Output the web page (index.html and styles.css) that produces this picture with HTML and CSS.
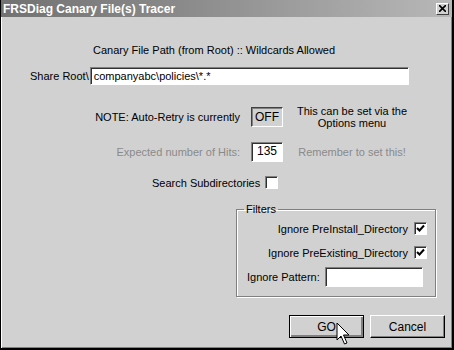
FILE: index.html
```html
<!DOCTYPE html>
<html lang="en">
<head>
    <meta charset="UTF-8">
    <title>FRSDiag Canary File(s) Tracer</title>
    <link rel="stylesheet" href="styles.css">
</head>
<body>
    <div class="window">
        <div class="titlebar">
            <span class="title">FRSDiag Canary File(s) Tracer</span>
            <span class="close-btn">
                <svg width="7" height="7" viewBox="0 0 7 7"><path d="M0 0L7 7M7 0L0 7" stroke="#000" stroke-width="1.6"/></svg>
            </span>
        </div>
        <div class="content">
            <div class="heading">Canary File Path (from Root) :: Wildcards Allowed</div>

            <div class="share-row">
                <span>Share Root\</span>
                <div class="field share-field">companyabc\policies\*.*</div>
            </div>

            <div class="opt-row note-row">
                <span class="opt-label">NOTE: Auto-Retry is currently</span>
                <div class="status-box">OFF</div>
                <div class="hint">This can be set via the<br>Options menu</div>
            </div>

            <div class="opt-row hits-row">
                <span class="opt-label dim">Expected number of Hits:</span>
                <div class="field num-field">135</div>
                <div class="hint dim">Remember to set this!</div>
            </div>

            <div class="sub-row">
                <span>Search Subdirectories</span>
                <span class="check"></span>
            </div>

            <fieldset class="filters">
                <legend>Filters</legend>
                <div class="filter-row">
                    <span>Ignore PreInstall_Directory</span>
                    <span class="check">
                        <svg width="9" height="9" viewBox="0 0 9 9"><path d="M1 4L3.5 6.5L8 1.5" fill="none" stroke="#000" stroke-width="2"/></svg>
                    </span>
                </div>
                <div class="filter-row">
                    <span>Ignore PreExisting_Directory</span>
                    <span class="check">
                        <svg width="9" height="9" viewBox="0 0 9 9"><path d="M1 4L3.5 6.5L8 1.5" fill="none" stroke="#000" stroke-width="2"/></svg>
                    </span>
                </div>
                <div class="pattern-row">
                    <span>Ignore Pattern:</span>
                    <div class="field pattern-field"></div>
                </div>
            </fieldset>

            <div class="buttons">
                <button class="btn btn-default">GO</button>
                <button class="btn">Cancel</button>
            </div>
        </div>

        <!-- mouse pointer over the GO button -->
        <svg class="cursor" width="14" height="24" viewBox="0 0 14 24">
            <path d="M1 1L1 18L5 14L8.5 22L11 21L7.5 13L13 13Z" fill="#fff" stroke="#000" stroke-width="1"/>
        </svg>
    </div>
</body>
</html>
```

FILE: styles.css
```css
body {
    margin: 0;
    font-family: "Liberation Sans", Arial, sans-serif;
    font-size: 11px;
    color: #000;
    white-space: nowrap;
}
.window {
    position: relative;
    width: 454px;
    height: 350px;
    box-sizing: border-box;
    background-color: #d1d1d1;
    border-left: 1px solid #000;
    border-right: 2px solid #000;
    border-bottom: 2px solid #000;
    box-shadow: inset 1px 0 #fff, inset -1px -1px #808080;
    overflow: hidden;
}
.titlebar {
    display: flex;
    align-items: center;
    justify-content: space-between;
    height: 17px;
    padding: 0 3px 0 2px;
    background: linear-gradient(to right, #727272, #8a8a8a 40%, #b8b8b8);
}
.title {
    color: #fff;
    font-weight: bold;
    font-size: 12px;
}
.close-btn {
    display: flex;
    align-items: center;
    justify-content: center;
    width: 11px;
    height: 10px;
    background-color: #d1d1d1;
    border: 1px solid;
    border-color: #fff #404040 #404040 #fff;
}
.content {
    display: flex;
    flex-direction: column;
}
.heading {
    margin: 27px 0 0 92px;
    line-height: 13px;
}
.share-row {
    display: flex;
    align-items: center;
    margin-top: 10px;
    padding-left: 29px;
}
.field {
    box-sizing: border-box;
    background-color: #fff;
    border: 1px solid;
    border-color: #808080 #fff #fff #808080;
    box-shadow: inset 1px 1px #303030;
    padding: 2px 3px;
    line-height: 13px;
}
.share-field {
    width: 319px;
    height: 18px;
    margin-left: 1px;
}
.opt-row {
    display: grid;
    grid-template-columns: 239px 32px 116px;
    grid-template-rows: 20px;
    column-gap: 11px;
    align-items: center;
}
.opt-label {
    text-align: right;
}
.note-row {
    margin-top: 22px;
}
.status-box {
    box-sizing: border-box;
    height: 20px;
    border: 1px solid;
    border-color: #404040 #fff #fff #404040;
    box-shadow: inset 1px 1px #808080;
    text-align: center;
    line-height: 18px;
    font-size: 12px;
}
.hint {
    text-align: center;
    line-height: 12px;
}
.dim {
    color: #8a8a8a;
}
.hits-row {
    margin-top: 15px;
}
.num-field {
    height: 20px;
    text-align: center;
    font-size: 12px;
    padding: 2px 0;
}
.sub-row {
    display: flex;
    align-items: center;
    gap: 5px;
    margin-top: 14px;
    padding-left: 151px;
}
.check {
    display: inline-flex;
    align-items: center;
    justify-content: center;
    box-sizing: border-box;
    width: 13px;
    height: 13px;
    background-color: #fff;
    border: 1px solid;
    border-color: #808080 #fff #fff #808080;
    box-shadow: inset 1px 1px #303030;
}
.filters {
    box-sizing: border-box;
    width: 200px;
    min-width: 0;
    margin: 14px 0 0 235px;
    padding: 7px 8px 9px 10px;
    border: 1px solid #808080;
    box-shadow: inset 1px 1px #fff, 1px 1px #fff;
}
.filters legend {
    padding: 0 2px;
    margin-left: -3px;
    line-height: 12px;
}
.filter-row {
    display: flex;
    justify-content: flex-end;
    align-items: center;
    gap: 6px;
    height: 13px;
    margin-bottom: 11px;
}
.filter-row + .pattern-row {
    margin-top: -3px;
}
.pattern-row {
    display: flex;
    justify-content: space-between;
    align-items: center;
    padding-right: 4px;
}
.pattern-field {
    width: 98px;
    height: 20px;
}
.buttons {
    display: flex;
    justify-content: flex-end;
    gap: 6px;
    margin-top: 18px;
    padding-right: 7px;
}
.btn {
    box-sizing: border-box;
    width: 75px;
    height: 23px;
    font-family: "Liberation Sans", Arial, sans-serif;
    font-size: 12px;
    background-color: #d1d1d1;
    border: 1px solid;
    border-color: #fff #000 #000 #fff;
    box-shadow: inset -1px -1px #808080;
    padding: 0;
}
.btn-default {
    border: 1px solid #000;
    box-shadow: inset 1px 1px #fff, inset -2px -2px #808080;
}
.cursor {
    position: absolute;
    left: 335px;
    top: 322px;
}
```
